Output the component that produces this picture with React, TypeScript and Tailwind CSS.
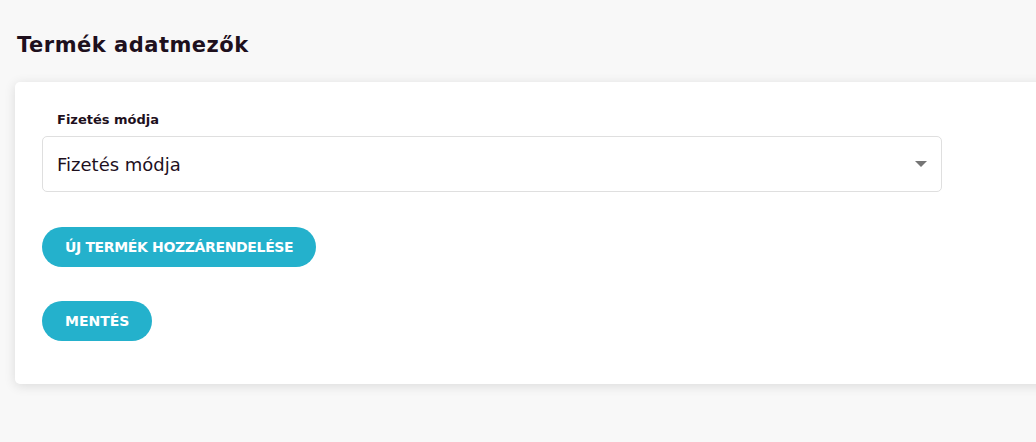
export default function App() {
  return (
    <div
      className="min-h-screen w-screen overflow-hidden bg-[#f8f8f8] text-[#1e101d]"
      style={{ fontFamily: "'DejaVu Sans', 'Noto Sans', sans-serif" }}
    >
      <div className="pl-[15px] pt-[27px]">
        <h1 className="pl-[2px] text-[21px] font-bold leading-[36px] tracking-[0.5px]">Termék adatmezők</h1>

        {/* Card */}
        <div className="mt-[19px] w-[1100px] rounded-[5px] bg-white px-[27px] pb-[43px] pt-[30px] shadow-[0_2px_12px_rgba(0,0,0,0.12)]">
          <label className="block pl-[15px] text-[13px] font-bold leading-[16px]">Fizetés módja</label>

          <div className="mt-[8px] flex h-[56px] w-[900px] items-center justify-between rounded-[5px] border border-[#dfdfdf] bg-white pl-[14px] pr-[13px]">
            <span className="text-[18px] text-[#1e101d]">Fizetés módja</span>
            <svg width="12" height="6" viewBox="0 0 12 6" className="mr-[1px]">
              <path d="M0 0 L12 0 L6 6 Z" fill="#757575" />
            </svg>
          </div>

          <button className="mt-[35px] flex h-[40px] items-center rounded-full bg-[#24b1cc] px-[23px] text-[14px] font-bold uppercase tracking-[-0.35px] text-white">
            Új termék hozzárendelése
          </button>

          <button className="mt-[34px] flex h-[40px] items-center rounded-full bg-[#24b1cc] px-[23px] text-[14px] font-bold uppercase text-white">
            Mentés
          </button>
        </div>
      </div>
    </div>
  );
}
